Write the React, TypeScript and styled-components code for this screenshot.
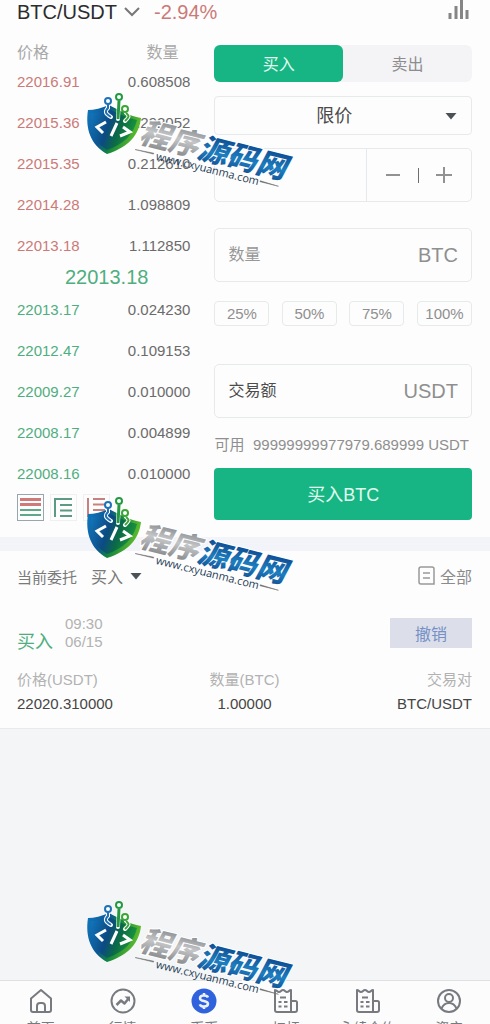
import React from 'react';
import styled, { createGlobalStyle } from 'styled-components';

const GlobalStyle = createGlobalStyle`
  *, *::before, *::after { box-sizing: border-box; }
  body {
    margin: 0;
    background: #fdfdfd;
    color: #555;
    font-family: "Liberation Sans", "Noto Sans CJK SC", sans-serif;
    font-size: 15px;
  }
  button, input, select { font: inherit; color: inherit; margin: 0; }
  button { cursor: pointer; padding: 0; border: 0; background: none; }
  h1, h2, p, dl, dd, dt { margin: 0; font-weight: 400; }
  svg { display: block; flex: none; }
`;

const red = '#cb7a78';
const green = '#4fae80';
const brand = '#16b583';
const line = '#e6eaeb';

const Page = styled.div`
  position: relative;
  display: flex;
  flex-direction: column;
  height: 100vh;
  overflow: hidden;
  background: #f4f5f6;
`;

const TopBar = styled.header`
  display: flex;
  align-items: center;
  height: 24px;
  padding: 0 21px 0 17px;
  background: #fdfdfd;
  font-size: 20px;
  line-height: 24px;
`;
const Pair = styled.button`
  display: flex;
  align-items: center;
  gap: 7px;
  color: #2c2c2c;
`;
const Change = styled.span`
  margin-left: 14px;
  color: ${red};
`;
const ChartButton = styled.button`
  margin-left: auto;
`;

const Trade = styled.main`
  display: grid;
  grid-template-columns: minmax(0, 173fr) minmax(0, 257fr);
  column-gap: 24px;
  padding: 20px 18px 16px 17px;
  background: #fdfdfd;
`;

const Book = styled.table`
  width: 100%;
  border-collapse: collapse;
  line-height: 17px;
  th, td { padding: 0; text-align: left; font-weight: 400; }
  th:last-child, td:last-child { text-align: right; }
`;
const HeadRow = styled.tr`
  height: 17px;
  color: #a9a9a9;
  font-size: 16px;
  th:last-child { padding-right: 12px; }
`;
const BookRow = styled.tr<{ $tone: string }>`
  height: 41px;
  color: #6b6b6b;
  td:first-child { color: ${(p) => p.$tone}; }
`;
const LastRow = styled.tr`
  height: 23px;
  td:last-child {
    padding-left: 6px;
    text-align: center;
    color: ${green};
    font-size: 20px;
    line-height: 23px;
  }
`;
const Depths = styled.div`
  display: flex;
  gap: 6px;
`;
const DepthButton = styled.button<{ $on?: boolean }>`
  display: grid;
  place-items: center;
  width: 27px;
  height: 27px;
  border: 1px solid ${(p) => (p.$on ? '#9aa6ad' : '#eff1f1')};
`;

const Form = styled.form`
  display: flex;
  flex-direction: column;
  padding-top: 1px;
`;
const Tabs = styled.div`
  display: flex;
  height: 37px;
  border-radius: 6px;
  background: #f4f4f7;
`;
const Tab = styled.button<{ $on?: boolean }>`
  flex: 1;
  padding-bottom: 2px;
  border-radius: 6px;
  font-size: 16px;
  color: ${(p) => (p.$on ? '#e2fbef' : '#8d8d8d')};
  background: ${(p) => (p.$on ? brand : 'transparent')};
`;
const SelectBox = styled.div`
  display: flex;
  align-items: center;
  height: 39px;
  margin-top: 14px;
  padding-right: 14px;
  border: 1px solid ${line};
  border-radius: 4px;
`;
const Kind = styled.select`
  flex: 1;
  height: 37px;
  padding: 0 0 0 8px;
  border: 0;
  appearance: none;
  background: none;
  color: #4a4a4a;
  font-size: 18px;
  text-align: center;
  text-align-last: center;
`;
const Stepper = styled.div`
  display: flex;
  height: 54px;
  margin-top: 13px;
  border: 1px solid ${line};
  border-radius: 5px;
`;
const PriceInput = styled.input`
  flex: 1;
  min-width: 0;
  padding: 0 13px;
  border: 0;
  background: none;
  outline: none;
`;
const Steps = styled.div`
  display: flex;
  align-items: center;
  justify-content: center;
  gap: 16px;
  width: 105px;
  border-left: 1px solid ${line};
`;
const Divider = styled.span`
  width: 1px;
  height: 15px;
  background: #6d6d6d;
`;
const Field = styled.label<{ $gap: number; $dark?: boolean }>`
  display: flex;
  align-items: center;
  height: 54px;
  margin-top: ${(p) => p.$gap}px;
  padding: 0 13px;
  border: 1px solid ${line};
  border-radius: 5px;
  color: #8f8f8f;
  font-size: 20px;
  input {
    flex: 1;
    min-width: 0;
    padding: 0;
    border: 0;
    outline: none;
    background: none;
    font-size: 16px;
  }
  input::placeholder {
    opacity: 1;
    color: ${(p) => (p.$dark ? '#4c4c4c' : '#979797')};
  }
`;
const Percents = styled.div`
  display: flex;
  justify-content: space-between;
  margin-top: 19px;
`;
const Percent = styled.button`
  width: 55px;
  height: 25px;
  border: 1px solid ${line};
  border-radius: 4px;
  color: #8f8f8f;
`;
const Available = styled.p`
  display: flex;
  justify-content: space-between;
  margin-top: 17px;
  padding-right: 3px;
  line-height: 20px;
  color: #8f8f8f;
  white-space: nowrap;
`;
const Submit = styled.button`
  height: 52px;
  margin-top: 13px;
  padding-bottom: 2px;
  border-radius: 4px;
  background: ${brand};
  color: #e2fbef;
  font-size: 18px;
`;

const Orders = styled.section`
  padding: 13px 18px 12px 17px;
  border-top: 14px solid #f3f4fa;
  border-bottom: 1px solid #e9eaeb;
  background: #fdfdfd;
`;
const OrdersHead = styled.div`
  display: flex;
  align-items: center;
  height: 24px;
  color: #7a7a7a;
  font-size: 16px;
`;
const Title = styled.h2`
  font-size: 15px;
`;
const Filter = styled.button`
  display: flex;
  align-items: center;
  gap: 7px;
  margin-left: 14px;
  font-size: 16px;
`;
const All = styled.a`
  display: flex;
  align-items: center;
  gap: 5px;
  margin-left: auto;
  color: #8b8b8b;
  text-decoration: none;
`;
const OrderTop = styled.div`
  display: flex;
  align-items: center;
  height: 38px;
  margin-top: 26px;
`;
const Side = styled.span`
  align-self: flex-end;
  color: ${green};
  font-size: 18px;
  line-height: 20px;
`;
const Time = styled.time`
  margin-left: 12px;
  color: #b2b2b2;
  line-height: 18px;
`;
const Cancel = styled.button`
  width: 82px;
  height: 30px;
  margin-left: auto;
  background: #dcdfe9;
  color: #7590c6;
  font-size: 16px;
`;
const Details = styled.dl`
  display: grid;
  grid-template-columns: repeat(3, minmax(0, 1fr));
  margin-top: 16px;
  line-height: 24px;
  text-align: center;
  div:first-child { text-align: left; }
  div:last-child { text-align: right; }
  dt { color: #b2b2b2; }
  dd { color: #454545; }
`;

const Nav = styled.nav`
  display: flex;
  height: 44px;
  margin-top: auto;
  border-top: 1px solid #dfe1e3;
  background: #fcfcfd;
  overflow: hidden;
`;
const NavLink = styled.a`
  display: flex;
  flex: 1;
  flex-direction: column;
  align-items: center;
  gap: 3px;
  padding-top: 6px;
  color: #777b80;
  font-size: 14px;
  line-height: 20px;
  text-decoration: none;
  white-space: nowrap;
`;

const Marks = styled.div`
  position: absolute;
  top: 91px;
  left: 80px;
  display: grid;
  gap: 284px;
  pointer-events: none;
`;

const asks = [
  ['22016.91', '0.608508'],
  ['22015.36', '0.292052'],
  ['22015.35', '0.212610'],
  ['22014.28', '1.098809'],
  ['22013.18', '1.112850'],
];
const bids = [
  ['22013.17', '0.024230'],
  ['22012.47', '0.109153'],
  ['22009.27', '0.010000'],
  ['22008.17', '0.004899'],
  ['22008.16', '0.010000'],
];

const Caret = () => (
  <svg width="12" height="8" viewBox="0 0 12 8" aria-hidden="true">
    <path d="M0.5 1h11L6 7.5z" fill="#4b5257" />
  </svg>
);

const DepthIcon = ({ kind }: { kind: 'both' | 'bids' | 'asks' }) => (
  <svg width="21" height="21" viewBox="0 0 21 21" fill="none" strokeWidth="2" aria-hidden="true">
    {kind === 'both' && (
      <>
        <path d="M0 2.5h21M0 7.5h21" stroke="#cf7a78" strokeWidth="3" />
        <path d="M0 13h21M0 18h21" stroke="#5fa888" />
      </>
    )}
    {kind === 'bids' && <path d="M2 20V2h17M7 8h12M7 13.5h12M7 19h12" stroke="#5d9a83" />}
    {kind === 'asks' && <path d="M2 1v18h17M7 2h12M7 7.5h12M7 13h12" stroke="#c9817f" />}
  </svg>
);

const NavIcon = ({ name }: { name: string }) => {
  const common = {
    width: 26,
    height: 28,
    viewBox: '0 0 26 28',
    fill: 'none',
    stroke: 'currentColor',
    strokeWidth: 2,
    strokeLinejoin: 'round' as const,
    'aria-hidden': true,
  };
  if (name === 'home')
    return (
      <svg {...common}>
        <path d="M3 11.5 13 3l10 8.5V23a2 2 0 0 1-2 2H5a2 2 0 0 1-2-2z" />
        <path d="M9 25v-6a3 3 0 0 1 3-3h2a3 3 0 0 1 3 3v6" />
      </svg>
    );
  if (name === 'market')
    return (
      <svg {...common}>
        <circle cx="13" cy="14" r="11.5" />
        <path d="m6.5 18 4.5-4.5 3.5 3 4.5-5.5" strokeWidth="2.5" />
        <path d="M14.5 9.5H20V15z" fill="currentColor" stroke="none" />
      </svg>
    );
  if (name === 'coin')
    return (
      <svg {...common}>
        <circle cx="13" cy="14" r="12.5" fill="#2f62dc" stroke="none" />
        <path
          d="M17 10.5c-.5-1.5-2-2-4-2-2.500 0-4 1-4 2.700 0 4 8 1.600 8 5.600 0 1.700-1.500 2.700-4 2.700-2.200 0-3.700-.6-4.200-2.200M13 6v3M13 19v3"
          stroke="#eaf1ff"
          strokeWidth="2.5"
        />
      </svg>
    );
  if (name === 'user')
    return (
      <svg {...common}>
        <circle cx="13" cy="14" r="11" />
        <circle cx="13" cy="11" r="4" />
        <path d="M5.5 21.5c1.500-3.500 4-5.500 7.500-5.500s6 2 7.500 5.500" />
      </svg>
    );
  return (
    <svg {...common}>
      <path d="M2 3c2 0 2 2 4 2s2-2 4-2 2 2 4 2 2-2 4-2v22H4a2 2 0 0 1-2-2z" />
      <path d="M18 14h4.5a1.5 1.5 0 0 1 1.5 1.5V23a2 2 0 0 1-2 2h-4M7 10.5h6M5.5 15h3M11 15h3.5M5.5 19.5h3M11 19.5h3.5" />
    </svg>
  );
};

const nav = [
  ['home', '首页'],
  ['market', '行情'],
  ['coin', '币币'],
  ['bill', '杠杆'],
  ['bill', '永续合约'],
  ['user', '资产'],
];

const Watermark = ({ id }: { id: string }) => (
  <svg width="220" height="120" viewBox="0 0 220 120" aria-label="程序源码网">
    <defs>
      <linearGradient id={`${id}s`} x1="0" y1="0" x2="1" y2="0.3">
        <stop offset="0" stopColor="#1178bd" />
        <stop offset="0.4" stopColor="#0b5694" />
        <stop offset="0.6" stopColor="#11833f" />
        <stop offset="1" stopColor="#5cba2c" />
      </linearGradient>
      <linearGradient id={`${id}i`} x1="0" y1="0.2" x2="1" y2="0.5">
        <stop offset="0" stopColor="#1173b8" />
        <stop offset="0.4" stopColor="#0c4a83" />
        <stop offset="0.65" stopColor="#0b6b45" />
        <stop offset="1" stopColor="#1b9a3c" />
      </linearGradient>
      <linearGradient id={`${id}g`} x1="0" y1="0" x2="0" y2="1">
        <stop offset="0.2" stopColor="#8e9194" />
        <stop offset="0.5" stopColor="#c4c6c8" />
        <stop offset="0.9" stopColor="#85888b" />
      </linearGradient>
      <linearGradient id={`${id}b`} x1="0" y1="0" x2="0" y2="1">
        <stop offset="0.2" stopColor="#0e4a90" />
        <stop offset="0.6" stopColor="#1d7fc0" />
        <stop offset="1" stopColor="#0d3f85" />
      </linearGradient>
    </defs>
    <path d="M8 19c6 0 14-2 21-5 8 4 20 11 32 13-2 17-12 29-34 36C11 54 5 38 8 19z" fill={`url(#${id}s)`} />
    <path d="M11 22c6 0 13-1 18-4 8 4 18 9 28 11-3 13-12 24-30 30C14 51 9 37 11 22z" fill={`url(#${id}i)`} />
    <g fill="none" stroke="#fff" strokeWidth="4" strokeLinecap="round">
      <path d="M28 13v4c-4 4-2 6 3 9M39 9l-1 19M46 22c4 3 3 4-1 8" />
    </g>
    <g fill="#fff" strokeWidth="2">
      <path d="M28 13v4c-4 4-2 6 3 9" fill="none" stroke="#1d72b8" />
      <path d="m39 10-1 18" fill="none" stroke="#239a42" strokeWidth="3" />
      <path d="M46 22c4 3 3 4-1 8" fill="none" stroke="#3ba437" />
      <circle cx="28" cy="10" r="3" stroke="#1d72b8" />
      <circle cx="39" cy="6" r="3" stroke="#239a42" />
      <circle cx="45" cy="18" r="3" stroke="#3ba437" />
    </g>
    <path d="m26 31-9 5 6 6M37 32l-6 13M43 36l7 5-10 4" fill="none" stroke="#fff" strokeWidth="3" />
    <g transform="translate(58 51) rotate(14)">
      <g
        fontFamily="Noto Sans CJK SC"
        fontWeight="900"
        fontStyle="italic"
        stroke="#fff"
        strokeWidth="2"
        paintOrder="stroke"
      >
        <text x="0" y="0" fontSize="30" fill={`url(#${id}g)`}>程序</text>
        <text x="60" y="1" fontSize="30" fill={`url(#${id}b)`}>源码网</text>
      </g>
      <text x="21" y="13" fontFamily="Open Sans" fontSize="11" fontWeight="500" fill="#1d3c55">
        www.cxyuanma.com
      </text>
      <path d="m-1 8 19-1v1zM128 8l19 1-19 0z" fill="#555" stroke="#777" strokeWidth="0.5" />
    </g>
  </svg>
);

export default function App() {
  return (
    <Page>
      <GlobalStyle />
      <TopBar>
        <Pair type="button">
          BTC/USDT
          <svg width="16" height="10" viewBox="0 0 16 10" fill="none" stroke="#777" strokeWidth="2" aria-hidden="true">
            <path d="m1 1 7 7 7-7" />
          </svg>
        </Pair>
        <Change>-2.94%</Change>
        <ChartButton type="button" aria-label="K线">
          <svg width="21" height="24" viewBox="0 0 21 24" fill="none" stroke="#858585" strokeWidth="3" aria-hidden="true">
            <path d="M2 19v-6M8 19V6M13.5 19V0M19 19V10" />
          </svg>
        </ChartButton>
      </TopBar>

      <Trade>
        <div>
          <Book>
            <thead>
              <HeadRow><th>价格</th><th>数量</th></HeadRow>
            </thead>
            <tbody>
              {asks.map(([p, q]) => (
                <BookRow key={p} $tone={red}><td>{p}</td><td>{q}</td></BookRow>
              ))}
              <LastRow><td colSpan={2}>22013.18</td></LastRow>
              {bids.map(([p, q]) => (
                <BookRow key={p} $tone={green}><td>{p}</td><td>{q}</td></BookRow>
              ))}
            </tbody>
          </Book>
          <Depths>
            <DepthButton type="button" $on aria-label="全部盘口"><DepthIcon kind="both" /></DepthButton>
            <DepthButton type="button" aria-label="买盘"><DepthIcon kind="bids" /></DepthButton>
            <DepthButton type="button" aria-label="卖盘"><DepthIcon kind="asks" /></DepthButton>
          </Depths>
        </div>

        <Form onSubmit={(e) => e.preventDefault()}>
          <Tabs>
            <Tab type="button" $on>买入</Tab>
            <Tab type="button">卖出</Tab>
          </Tabs>
          <SelectBox>
            <Kind aria-label="委托类型"><option>限价</option></Kind>
            <Caret />
          </SelectBox>
          <Stepper>
            <PriceInput aria-label="价格" />
            <Steps>
              <button type="button" aria-label="减少">
                <svg width="18" height="18" viewBox="0 0 18 18" stroke="#929292" strokeWidth="2"><path d="M2 9h14" /></svg>
              </button>
              <Divider />
              <button type="button" aria-label="增加">
                <svg width="18" height="18" viewBox="0 0 18 18" stroke="#929292" strokeWidth="2"><path d="M1 9h16M9 1v16" /></svg>
              </button>
            </Steps>
          </Stepper>
          <Field $gap={26}><input placeholder="数量" aria-label="数量" />BTC</Field>
          <Percents>
            {['25%', '50%', '75%', '100%'].map((t) => <Percent type="button" key={t}>{t}</Percent>)}
          </Percents>
          <Field $gap={38} $dark><input placeholder="交易额" aria-label="交易额" />USDT</Field>
          <Available><span>可用</span><span>99999999977979.689999 USDT</span></Available>
          <Submit type="submit">买入BTC</Submit>
        </Form>
      </Trade>

      <Orders>
        <OrdersHead>
          <Title>当前委托</Title>
          <Filter type="button">买入<Caret /></Filter>
          <All href="#all">
            <svg width="17" height="20" viewBox="0 0 17 20" fill="none" stroke="#999" strokeWidth="1.5" aria-hidden="true">
              <path d="M4 1h10a2 2 0 0 1 2 2v15H3a2 2 0 0 1-2-2V3a2 2 0 0 1 2-2zM5 7h7M5 12h7" />
            </svg>
            全部
          </All>
        </OrdersHead>
        <OrderTop>
          <Side>买入</Side>
          <Time>09:30<br />06/15</Time>
          <Cancel type="button">撤销</Cancel>
        </OrderTop>
        <Details>
          <div><dt>价格(USDT)</dt><dd>22020.310000</dd></div>
          <div><dt>数量(BTC)</dt><dd>1.00000</dd></div>
          <div><dt>交易对</dt><dd>BTC/USDT</dd></div>
        </Details>
      </Orders>

      <Nav>
        {nav.map(([icon, label]) => (
          <NavLink href="#" key={label}><NavIcon name={icon} />{label}</NavLink>
        ))}
      </Nav>

      <Marks>
        <Watermark id="a" />
        <Watermark id="b" />
        <Watermark id="c" />
      </Marks>
    </Page>
  );
}
